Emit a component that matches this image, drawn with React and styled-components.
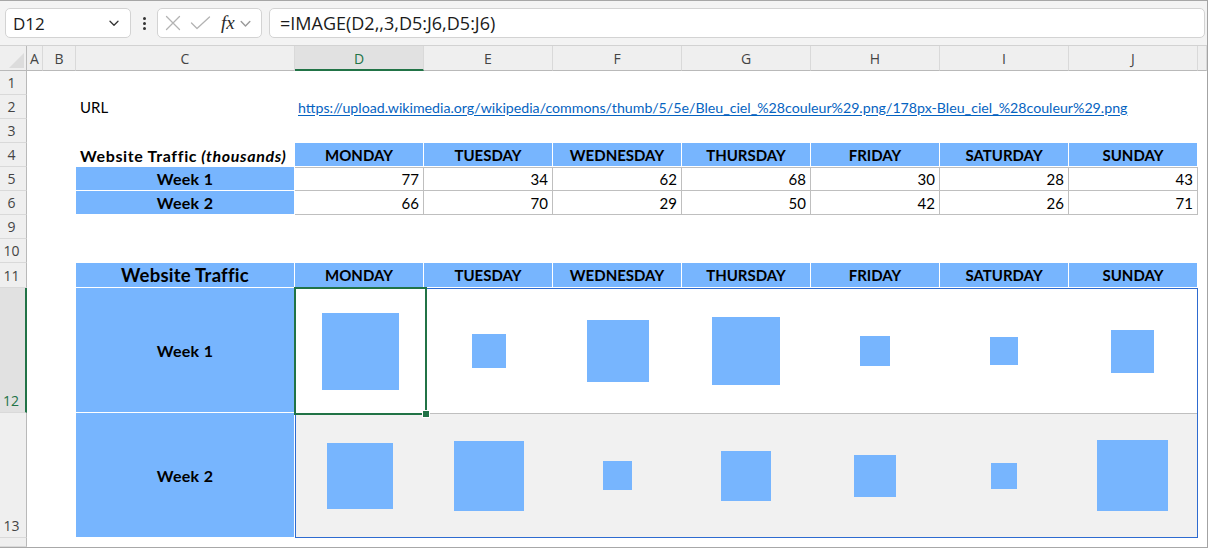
import React from "react";
import styled, { createGlobalStyle, css } from "styled-components";

const BLUE = "#77b5fe";
const GREEN = "#217346";

const GlobalStyle = createGlobalStyle`
  body {
    margin: 0;
    background: #fff;
    font-family: Lato, "Open Sans", sans-serif;
  }
`;

const Window = styled.div`
  width: 1208px;
  height: 548px;
  box-sizing: border-box;
  display: flex;
  flex-direction: column;
  overflow: hidden;
  border-right: 1px solid #a3a3a3;
  border-bottom: 1px solid #a8a8a8;
  background: #fff;
`;

const Toolbar = styled.div`
  height: 46px;
  flex-shrink: 0;
  box-sizing: border-box;
  display: flex;
  align-items: center;
  padding: 0 2px 0 5px;
  background: #f3f3f3;
  border-top: 1px solid #a6a6a6;
  border-bottom: 1px solid #d2d2d2;
  font-family: "Open Sans", "Noto Sans", sans-serif;
`;

const NameBox = styled.div`
  width: 126px;
  height: 30px;
  box-sizing: border-box;
  display: flex;
  align-items: center;
  justify-content: space-between;
  padding: 0 10px 0 7px;
  background: #fff;
  border: 1px solid #d3d3d3;
  border-radius: 5px;
  font-size: 17px;
  color: #1b1b1b;
`;

const Dots = styled.div`
  width: 26px;
  display: flex;
  flex-direction: column;
  align-items: center;
  gap: 2px;
  span {
    width: 3px;
    height: 3px;
    border-radius: 50%;
    background: #333;
  }
`;

const FxBox = styled.div`
  width: 105px;
  height: 30px;
  box-sizing: border-box;
  display: flex;
  align-items: center;
  gap: 9px;
  padding: 0 4px 0 7px;
  background: #fff;
  border: 1px solid #d3d3d3;
  border-radius: 5px;
`;

const Fx = styled.span`
  font-family: "Liberation Serif", serif;
  font-style: italic;
  font-size: 19px;
  color: #2b2b2b;
  margin-left: 1px;
  margin-right: -5px;
`;

const Formula = styled.div`
  flex: 1;
  height: 30px;
  margin-left: 7px;
  box-sizing: border-box;
  display: flex;
  align-items: center;
  padding-left: 10px;
  background: #fff;
  border: 1px solid #d3d3d3;
  border-radius: 5px;
  font-size: 18px;
  color: #1b1b1b;
`;

const Sheet = styled.div`
  flex: 1;
  display: grid;
  grid-template-columns: 27px 16px 33px 219px repeat(7, 129px) 1fr;
  grid-template-rows: 25px repeat(8, 24px) 25px 125px 125px 1fr;
  min-height: 0;
`;

const headBase = css`
  box-sizing: border-box;
  display: flex;
  background: #efefef;
  font-family: "Open Sans", "Noto Sans", sans-serif;
  font-size: 14px;
  color: #444;
`;

const Corner = styled.div`
  ${headBase};
  position: relative;
  border-right: 1px solid #b9b9b9;
  border-bottom: 1px solid #b9b9b9;
  &::after {
    content: "";
    position: absolute;
    right: 2px;
    bottom: 2px;
    border-style: solid;
    border-width: 0 0 15px 15px;
    border-color: transparent transparent #dcdcdc transparent;
  }
`;

const ColHead = styled.div`
  ${headBase};
  align-items: center;
  justify-content: center;
  padding-top: 1px;
  border-right: 1px solid #d9d9d9;
  border-bottom: 1px solid #b9b9b9;
  ${(p) =>
    p.$active &&
    css`
      background: #e1e1e1;
      color: ${GREEN};
      border-bottom: 2px solid ${GREEN};
    `}
`;

const RowHead = styled.div`
  ${headBase};
  align-items: flex-end;
  justify-content: center;
  padding: 0 3px 1px 0;
  border-right: 1px solid #b9b9b9;
  border-bottom: 1px solid #d9d9d9;
  line-height: 20px;
  ${(p) =>
    p.$active &&
    css`
      background: #e1e1e1;
      color: ${GREEN};
      border-right: 2px solid ${GREEN};
    `}
`;

const cellBase = css`
  box-sizing: border-box;
  display: flex;
  align-items: center;
  min-width: 0;
  white-space: nowrap;
  font-size: 15px;
  color: #000;
`;

const Blank = styled.div`
  ${cellBase};
`;

const TextCell = styled.div`
  ${cellBase};
  padding-left: 4px;
`;

const TableTitle = styled(TextCell)`
  font-weight: 700;
  font-size: 16px;
  letter-spacing: 0.65px;
  i {
    font-style: italic;
    margin-left: 4px;
  }
`;

const LinkCell = styled.div`
  ${cellBase};
  padding-left: 3px;
  overflow: visible;
`;

const Link = styled.a`
  font-size: 14.2px;
  color: #0563c1;
  text-decoration: underline;
  text-underline-offset: 2px;
`;

const BlueCell = styled.div`
  ${cellBase};
  justify-content: center;
  background: ${BLUE};
  border-right: 1px solid #fff;
  border-bottom: 1px solid #fff;
  font-weight: 700;
`;

const WeekCell = styled(BlueCell)`
  font-size: 16px;
  letter-spacing: 0.3px;
`;

const RangeTitle = styled(BlueCell)`
  font-size: 18.5px;
  letter-spacing: 0.25px;
`;

const NumCell = styled.div`
  ${cellBase};
  justify-content: flex-end;
  padding-right: 4px;
  border-right: 1px solid #bfbfbf;
  border-bottom: 1px solid #bfbfbf;
  ${(p) => p.$first && css`border-top: 1px solid #bfbfbf;`}
`;

const ImageRange = styled.div`
  grid-column: span 7;
  grid-row: span 2;
  box-sizing: border-box;
  display: grid;
  grid-template-columns: repeat(7, 1fr);
  grid-template-rows: 1fr 1fr;
  border: 1px solid #2e6bd0;
`;

const ImageCell = styled.div`
  position: relative;
  box-sizing: border-box;
  display: flex;
  align-items: center;
  justify-content: center;
  background: ${(p) => (p.$shade ? "#f1f1f1" : "#fff")};
  ${(p) => p.$shade && css`border-top: 1px solid #bfbfbf;`}
  ${(p) =>
    p.$selected &&
    css`
      z-index: 1;
      outline: 2px solid ${GREEN};
    `}
`;

const Handle = styled.span`
  position: absolute;
  right: -5px;
  bottom: -5px;
  width: 6px;
  height: 6px;
  background: ${GREEN};
  border: 1px solid #fff;
  z-index: 2;
`;

const Square = styled.div`
  background: ${BLUE};
  flex-shrink: 0;
`;

const days = ["MONDAY", "TUESDAY", "WEDNESDAY", "THURSDAY", "FRIDAY", "SATURDAY", "SUNDAY"];
const weeks = [
  { label: "Week 1", values: [77, 34, 62, 68, 30, 28, 43] },
  { label: "Week 2", values: [66, 70, 29, 50, 42, 26, 71] },
];
const cols = ["A", "B", "C", "D", "E", "F", "G", "H", "I", "J", ""];
const url =
  "https://upload.wikimedia.org/wikipedia/commons/thumb/5/5e/Bleu_ciel_%28couleur%29.png/178px-Bleu_ciel_%28couleur%29.png";

const Blanks = ({ n }) => Array.from({ length: n }, (_, i) => <Blank key={i} />);

const Chevron = ({ color = "#333", size = 12 }) => (
  <svg width={size} height={size} viewBox="0 0 12 12" fill="none">
    <path d="M2 4.2 L6 8.2 L10 4.2" stroke={color} strokeWidth="1.3" strokeLinecap="round" strokeLinejoin="round" />
  </svg>
);

const Toolbox = () => (
  <Toolbar>
    <NameBox>
      D12
      <Chevron />
    </NameBox>
    <Dots>
      <span />
      <span />
      <span />
    </Dots>
    <FxBox>
      <svg width="16" height="16" viewBox="0 0 16 16" fill="none">
        <path d="M1.5 1.5 L14.5 14.5 M14.5 1.5 L1.5 14.5" stroke="#b3b3b3" strokeWidth="1.3" strokeLinecap="round" />
      </svg>
      <svg width="21" height="14" viewBox="0 0 21 14" fill="none">
        <path d="M1.5 7 L7 12.5 L19.5 1" stroke="#b3b3b3" strokeWidth="1.3" strokeLinecap="round" strokeLinejoin="round" />
      </svg>
      <Fx>fx</Fx>
      <Chevron color="#9a9a9a" size={13} />
    </FxBox>
    <Formula>=IMAGE(D2,,3,D5:J6,D5:J6)</Formula>
  </Toolbar>
);

const App = () => (
  <>
    <GlobalStyle />
    <Window>
      <Toolbox />
      <Sheet>
        <Corner />
        {cols.map((c, i) => (
          <ColHead key={i} $active={c === "D"}>
            {c}
          </ColHead>
        ))}

        <RowHead>1</RowHead>
        <Blanks n={11} />

        <RowHead>2</RowHead>
        <Blank />
        <Blank />
        <TextCell>URL</TextCell>
        <LinkCell>
          <Link>{url}</Link>
        </LinkCell>
        <Blanks n={7} />

        <RowHead>3</RowHead>
        <Blanks n={11} />

        <RowHead>4</RowHead>
        <Blank />
        <Blank />
        <TableTitle>
          Website Traffic<i>(thousands)</i>
        </TableTitle>
        {days.map((d) => (
          <BlueCell key={d}>{d}</BlueCell>
        ))}
        <Blank />

        {weeks.map((w, r) => (
          <React.Fragment key={w.label}>
            <RowHead>{5 + r}</RowHead>
            <Blank />
            <Blank />
            <WeekCell>{w.label}</WeekCell>
            {w.values.map((v, i) => (
              <NumCell key={i} $first={r === 0}>
                {v}
              </NumCell>
            ))}
            <Blank />
          </React.Fragment>
        ))}

        <RowHead>9</RowHead>
        <Blanks n={11} />

        <RowHead>10</RowHead>
        <Blanks n={11} />

        <RowHead>11</RowHead>
        <Blank />
        <Blank />
        <RangeTitle>Website Traffic</RangeTitle>
        {days.map((d) => (
          <BlueCell key={d}>{d}</BlueCell>
        ))}
        <Blank />

        <RowHead $active>12</RowHead>
        <Blank />
        <Blank />
        <WeekCell>Week 1</WeekCell>
        <ImageRange>
          {weeks.map((w, r) =>
            w.values.map((v, i) => (
              <ImageCell key={`${r}-${i}`} $shade={r === 1} $selected={r === 0 && i === 0}>
                <Square style={{ width: v, height: v }} />
                {r === 0 && i === 0 && <Handle />}
              </ImageCell>
            ))
          )}
        </ImageRange>
        <Blank />

        <RowHead>13</RowHead>
        <Blank />
        <Blank />
        <WeekCell>Week 2</WeekCell>
        <Blank />

        <RowHead />
        <Blanks n={11} />
      </Sheet>
    </Window>
  </>
);

export default App;
